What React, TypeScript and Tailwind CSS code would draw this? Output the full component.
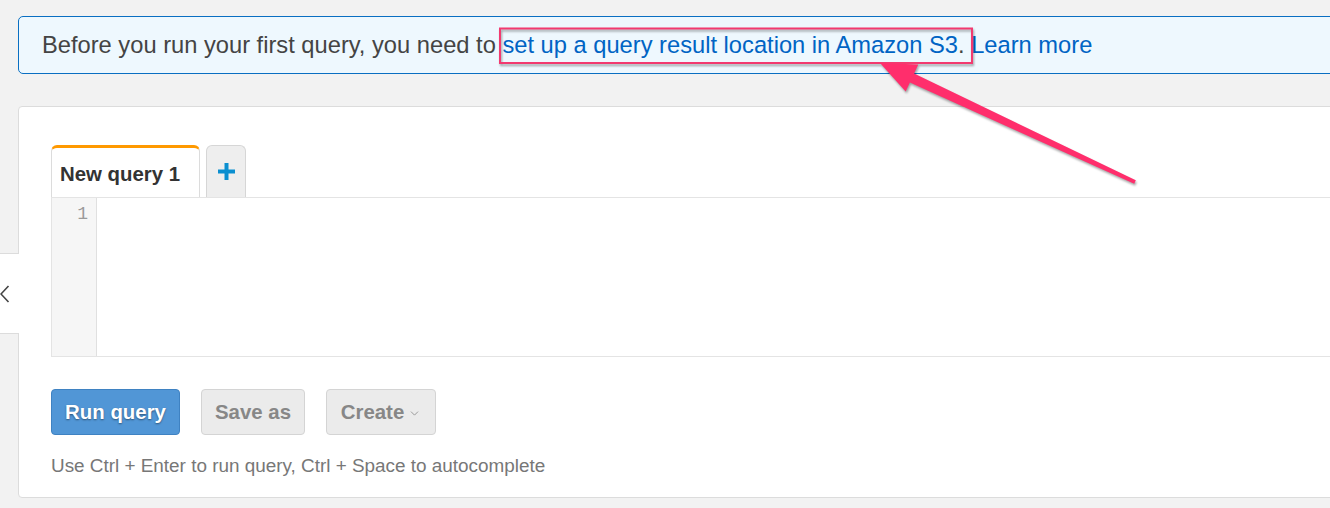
import { ChevronDown } from 'lucide-react'

export default function App() {
  return (
    <div className="relative w-[1330px] h-[508px] overflow-hidden bg-[#f2f2f2] font-['Liberation_Sans',Arial,sans-serif]">
      <div className="pt-4 pl-[18px]">
        {/* Notice banner */}
        <div className="w-[1330px] h-[58px] flex items-center pl-[23px] pt-[1px] bg-[#eef8fe] border border-[#0a6fc2] rounded-[5px] text-[23.7px] text-[#444] whitespace-nowrap">
          <span>Before you run your first query, you need to&nbsp;</span>
          <a className="text-[#0064c4]">set up a query result location in Amazon S3</a>
          <span>.&nbsp;</span>
          <a className="text-[#0064c4]">Learn more</a>
        </div>

        {/* Query editor panel */}
        <div className="mt-8 w-[1330px] h-[392px] bg-white border border-[#dcdcdc] rounded-[4px] pt-[38px] pl-[32px]">
          <div className="flex items-end gap-[6px]">
            <div className="h-[52px] w-[149px] flex items-center pl-2 pt-[3px] bg-white border border-[#dcdcdc] border-t-[3px] border-t-[#ff9900] border-b-0 rounded-t-[6px] text-[20.4px] font-bold text-[#333]">
              New query 1
            </div>
            <div className="h-[52px] w-[40px] flex items-center justify-center bg-[#eeeeee] border border-[#d6d6d6] border-b-0 rounded-t-[6px]">
              <svg width="17" height="17" viewBox="0 0 17 17">
                <rect x="6.5" y="0" width="4" height="17" fill="#0b8fd0" />
                <rect x="0" y="6.5" width="17" height="4" fill="#0b8fd0" />
              </svg>
            </div>
          </div>

          <div className="w-[1300px] h-[160px] flex border border-[#e4e4e4]">
            <div className="w-[45px] bg-[#f6f6f6] border-r border-[#e0e0e0] pr-2 pt-[6px] text-right text-[18px] leading-[20px] text-[#9a9a9a] font-['Liberation_Mono',monospace]">
              1
            </div>
            <div className="flex-1 bg-white" />
          </div>

          <div className="mt-8 flex gap-[21px]">
            <button className="h-[46px] w-[129px] rounded-[4px] bg-[#5196d6] border border-[#3f82c2] text-white text-[20.4px] font-bold [text-shadow:0_1px_2px_rgba(0,0,0,0.45)]">
              Run query
            </button>
            <button className="h-[46px] w-[104px] rounded-[4px] bg-[#ebebeb] border border-[#d4d4d4] text-[#878787] text-[20.4px] font-bold">
              Save as
            </button>
            <button className="h-[46px] w-[110px] rounded-[4px] bg-[#ebebeb] border border-[#d4d4d4] text-[#878787] text-[20.4px] font-bold flex items-center justify-center gap-1">
              Create
              <ChevronDown size={13} strokeWidth={1.5} className="mt-[2px]" />
            </button>
          </div>

          <p className="mt-[20px] text-[18.9px] leading-[22px] text-[#777]">
            Use Ctrl + Enter to run query, Ctrl + Space to autocomplete
          </p>
        </div>
      </div>

      {/* Side drawer toggle */}
      <div className="absolute left-0 top-[253px] w-[19px] h-[81px] bg-white border-y border-[#dcdcdc] flex items-center">
        <svg width="10" height="18" viewBox="0 0 10 18">
          <polyline points="8.5,1 1,9 8.5,17" fill="none" stroke="#444" strokeWidth="1.6" />
        </svg>
      </div>

      {/* Annotation overlay */}
      <svg
        className="absolute inset-0 pointer-events-none drop-shadow-[1px_2px_1px_rgba(0,0,0,0.35)]"
        width="1330"
        height="508"
      >
        <rect x="500" y="28.5" width="472" height="34.5" fill="none" stroke="#f23a70" strokeWidth="2" />
        <polygon
          points="880,63 918.3,64.4 914.1,73.5 1135.8,180.2 1134.2,183.8 909.9,82.5 905.7,91.6"
          fill="#ff2e6c"
        />
      </svg>
    </div>
  )
}
